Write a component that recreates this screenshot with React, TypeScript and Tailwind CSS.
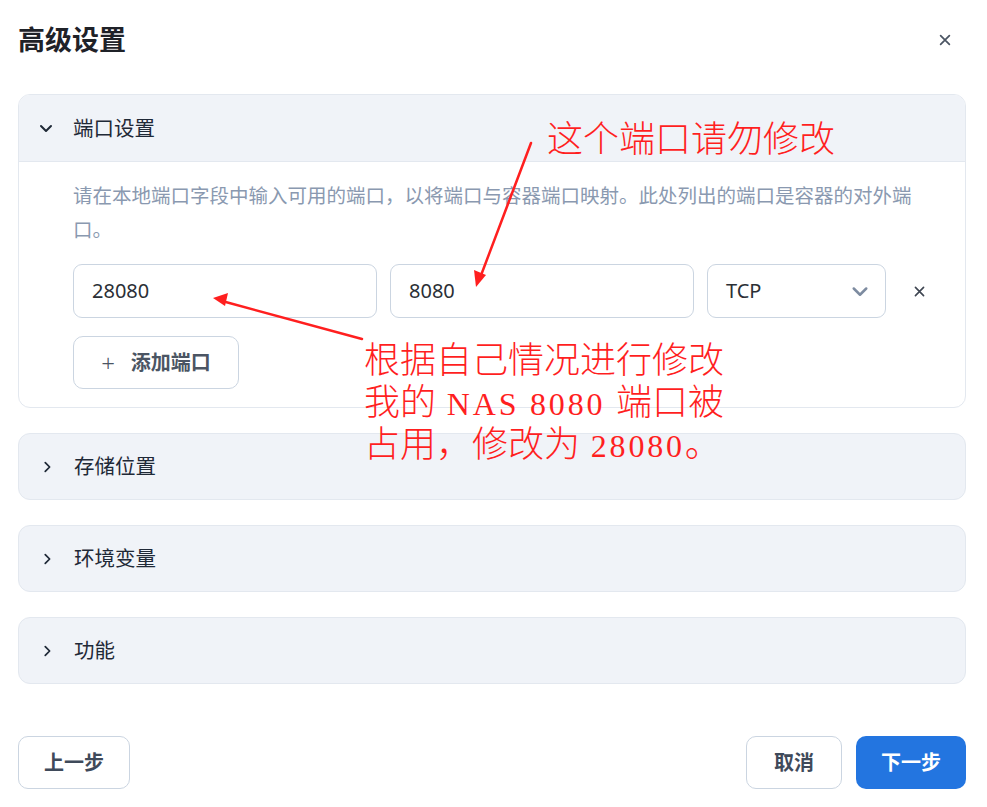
import React from 'react';

const ChevronDown = ({ className }: { className?: string }) => (
  <svg className={className} viewBox="0 0 16 16" fill="none" stroke="currentColor" strokeWidth="2" strokeLinecap="round" strokeLinejoin="round">
    <path d="M3 6l5 5 5-5" />
  </svg>
);

const ChevronRight = ({ className }: { className?: string }) => (
  <svg className={className} viewBox="0 0 16 16" fill="none" stroke="currentColor" strokeWidth="2" strokeLinecap="round" strokeLinejoin="round">
    <path d="M6 3l5 5-5 5" />
  </svg>
);

const CloseIcon = ({ className }: { className?: string }) => (
  <svg className={className} viewBox="0 0 16 16" fill="none" stroke="currentColor" strokeWidth="2" strokeLinecap="round">
    <path d="M3 3l10 10M13 3L3 13" />
  </svg>
);

const CollapsedSection = ({ title }: { title: string }) => (
  <div className="h-[67px] rounded-[12px] border border-[#e3e8ef] bg-[#f0f3f8] flex items-center pl-[21px]">
    <ChevronRight className="w-[14px] h-[14px] text-[#1f2937]" />
    <span className="ml-[20px] text-[20.5px] text-[#1f2937]">{title}</span>
  </div>
);

const latin = { fontFamily: '"Liberation Serif", serif' };

export default function App() {
  return (
    <div
      className="relative w-full min-h-screen bg-white pl-[18px] pr-[21px] pb-[18px]"
      style={{ fontFamily: '"Noto Sans", "Noto Sans CJK SC", sans-serif' }}
    >
      {/* header */}
      <div className="flex items-center justify-between pt-[22px]">
        <h1 className="text-[27px] leading-[36px] font-bold text-[#1f2228]">高级设置</h1>
        <button className="mr-[14px] text-[#4b5563]">
          <CloseIcon className="w-[14px] h-[14px]" />
        </button>
      </div>

      <div className="mt-[36px] flex flex-col gap-[25px]">
        {/* port settings, expanded */}
        <div className="rounded-[12px] border border-[#e3e8ef] overflow-hidden">
          <div className="h-[67px] bg-[#f0f3f8] border-b border-[#e3e8ef] flex items-center pl-[19px]">
            <ChevronDown className="w-[16px] h-[16px] text-[#1f2937]" />
            <span className="ml-[19px] text-[20.5px] text-[#1f2937]">端口设置</span>
          </div>
          <div className="pl-[54px] pr-[26px] pt-[17px] pb-[18px]">
            <p className="text-[19.5px] leading-[34px] text-[#8a99b0] whitespace-nowrap">
              请在本地端口字段中输入可用的端口，以将端口与容器端口映射。此处列出的端口是容器的对外端
              <br />
              口。
            </p>
            <div className="mt-[17px] flex items-center gap-[13px]">
              <div className="flex-1 h-[54px] rounded-[9px] border border-[#cbd5e1] flex items-center px-[18px] text-[20px] text-[#2b2f36]">
                28080
              </div>
              <div className="flex-1 h-[54px] rounded-[9px] border border-[#cbd5e1] flex items-center px-[18px] text-[20px] text-[#2b2f36]">
                8080
              </div>
              <div className="w-[179px] h-[54px] rounded-[9px] border border-[#cbd5e1] flex items-center justify-between pl-[18px] pr-[15px] text-[20px] text-[#2b2f36]">
                <span>TCP</span>
                <ChevronDown className="w-[20px] h-[20px] text-[#7d8ba0]" />
              </div>
              <div className="w-[40px] flex justify-center text-[#3f4652]">
                <CloseIcon className="w-[13px] h-[13px]" />
              </div>
            </div>
            <button className="mt-[18px] h-[53px] w-[166px] rounded-[10px] border border-[#cbd5e1] flex items-center justify-center gap-[16px] text-[20px] font-bold text-[#4b5563]">
              <span className="font-light text-[24px] leading-none">+</span>
              <span>添加端口</span>
            </button>
          </div>
        </div>

        <CollapsedSection title="存储位置" />
        <CollapsedSection title="环境变量" />
        <CollapsedSection title="功能" />
      </div>

      {/* footer */}
      <div className="mt-[52px] flex items-center justify-between">
        <button className="h-[53px] w-[112px] rounded-[10px] border border-[#cbd5e1] text-[20px] font-bold text-[#3f4a5a]">
          上一步
        </button>
        <div className="flex gap-[14px]">
          <button className="h-[53px] w-[96px] rounded-[10px] border border-[#cbd5e1] text-[20px] font-bold text-[#3f4a5a]">
            取消
          </button>
          <button className="h-[53px] w-[110px] rounded-[10px] bg-[#2375e0] text-[20px] font-bold text-white">
            下一步
          </button>
        </div>
      </div>

      {/* red annotations drawn over the screenshot */}
      <div
        className="absolute left-[547px] top-[114px] text-[36px] leading-[44px] text-[#ff1f1f] font-light whitespace-nowrap pointer-events-none"
        style={{ fontFamily: '"Noto Sans CJK SC", sans-serif' }}
      >
        这个端口请勿修改
      </div>
      <div
        className="absolute left-[364px] top-[336px] text-[36px] text-[#ff1f1f] font-light whitespace-nowrap pointer-events-none"
        style={{ fontFamily: '"Noto Sans CJK SC", sans-serif' }}
      >
        <div className="h-[42px] leading-[42px]">根据自己情况进行修改</div>
        <div className="h-[42px] leading-[42px]">
          我的<span className="text-[32px] leading-none tracking-[2.8px]" style={latin}> NAS 8080 </span>端口被
        </div>
        <div className="h-[42px] leading-[42px]">
          占用，修改为<span className="text-[32px] leading-none tracking-[2.8px]" style={latin}> 28080</span>。
        </div>
      </div>
      <svg className="absolute left-0 top-0 w-[987px] h-[807px] pointer-events-none" viewBox="0 0 987 807">
        <g stroke="#ff1f1f" strokeWidth="2.5" fill="#ff1f1f" strokeLinecap="round">
          <line x1="531" y1="143" x2="480" y2="278" />
          <path d="M476 287 L474 270 L486 275 Z" stroke="none" />
          <line x1="362" y1="339" x2="222" y2="301" />
          <path d="M213 298 L228 293 L225 306 Z" stroke="none" />
        </g>
      </svg>
    </div>
  );
}
